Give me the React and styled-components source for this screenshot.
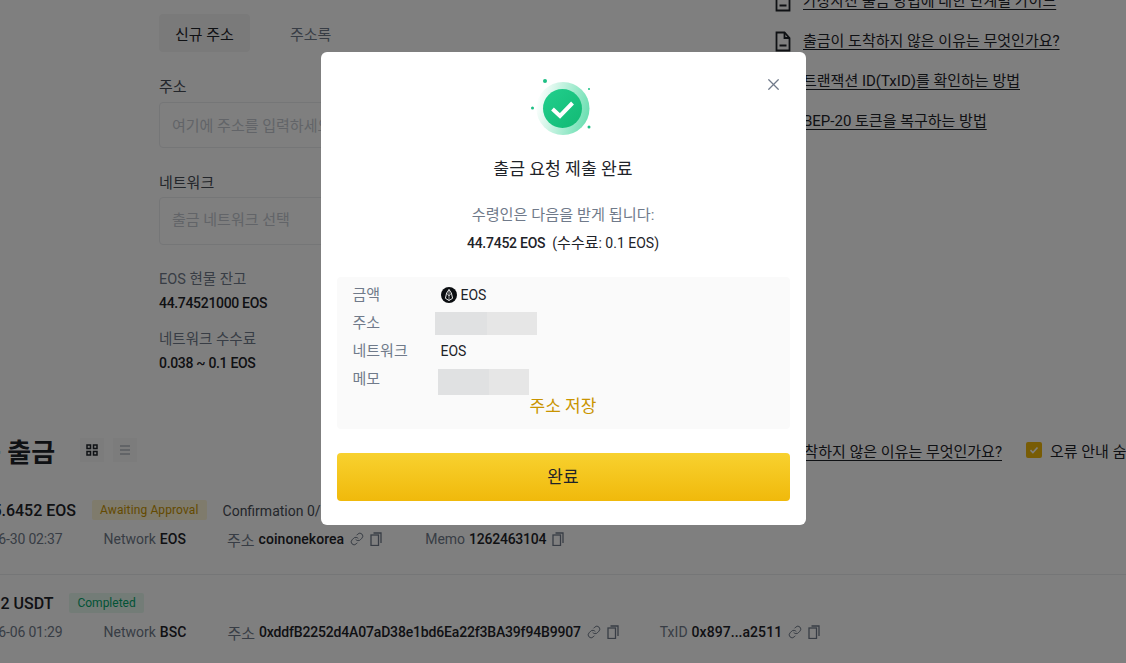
import React from "react";
import styled, { createGlobalStyle } from "styled-components";
import { X, Link } from "lucide-react";

const GlobalStyle = createGlobalStyle`
  html, body {
    margin: 0;
    padding: 0;
    background: #fff;
  }
  body {
    font-family: Roboto, "Noto Sans CJK KR", sans-serif;
    color: #1e2329;
  }
`;

const helpLinks = [
  "가상자산 출금 방법에 대한 단계별 가이드",
  "출금이 도착하지 않은 이유는 무엇인가요?",
  "트랜잭션 ID(TxID)를 확인하는 방법",
  "BEP-20 토큰을 복구하는 방법",
];

const DocIcon = () => (
  <svg width="16" height="21" viewBox="0 0 16 21" fill="none" stroke="#1e2329" strokeWidth="1.8">
    <path d="M1.5 1.5h8l5 5.5v12.5h-13z" />
    <path d="M9.5 1.5V7h5M4.5 14.5h7" />
  </svg>
);

const CopyIcon = () => (
  <svg width="12" height="14" viewBox="0 0 12 14" fill="none" stroke="#707a8a" strokeWidth="1.3">
    <rect x="1" y="3" width="7.5" height="10.5" />
    <path d="M3.5 1h7.5v10" />
  </svg>
);

const GridIcon = () => (
  <svg width="12" height="12" viewBox="0 0 12 12" fill="none" stroke="#1e2329" strokeWidth="1.5">
    <rect x="1" y="1" width="3.5" height="3.5" />
    <rect x="7.5" y="1" width="3.5" height="3.5" />
    <rect x="1" y="7.5" width="3.5" height="3.5" />
    <rect x="7.5" y="7.5" width="3.5" height="3.5" />
  </svg>
);

const ListIcon = () => (
  <svg width="12" height="12" viewBox="0 0 12 12" fill="none" stroke="#929aa5" strokeWidth="1.2">
    <path d="M1 2h10M1 6h10M1 10h10" />
  </svg>
);

const SuccessIcon = () => (
  <svg width="64" height="64" viewBox="0 0 64 64">
    <defs>
      <linearGradient id="halo" x1="0" y1="0.35" x2="1" y2="0.6">
        <stop offset="0" stopColor="#0ecb81" stopOpacity="0" />
        <stop offset="1" stopColor="#0ecb81" stopOpacity="0.62" />
      </linearGradient>
      <linearGradient id="disc" x1="0" y1="0" x2="1" y2="1">
        <stop offset="0" stopColor="#22cf8d" />
        <stop offset="1" stopColor="#12b974" />
      </linearGradient>
    </defs>
    <circle cx="32" cy="32.5" r="26.5" fill="url(#halo)" />
    <circle cx="31.5" cy="32.5" r="19.5" fill="url(#disc)" />
    <path d="M21.5 33l7.5 7 12.5-13" fill="none" stroke="#fff" strokeWidth="4" />
    <circle cx="14" cy="5" r="2" fill="#1dbf84" />
    <circle cx="58" cy="13" r="1" fill="#1dbf84" />
    <circle cx="1.5" cy="32" r="1.5" fill="#1dbf84" />
    <circle cx="58" cy="51" r="1.5" fill="#1dbf84" />
  </svg>
);

const EosIcon = () => (
  <svg width="16" height="16" viewBox="0 0 16 16">
    <circle cx="8" cy="8" r="8" fill="#0b0e11" />
    <path d="M8 2.5l2.4 3.6 1.2 5.2L8 13.5l-3.6-2.2 1.2-5.2z" fill="none" stroke="#fff" strokeWidth="0.9" />
    <path d="M8 2.5v11M5.6 6.1L8 9l2.4-2.9" fill="none" stroke="#fff" strokeWidth="0.6" />
  </svg>
);

const ChainIcon = () => <Link size={14} color="#707a8a" strokeWidth={1.7} />;

const App = () => (
  <Page>
    <GlobalStyle />
    <Top>
      <Form>
        <Tabs>
          <Tab $active>신규 주소</Tab>
          <Tab>주소록</Tab>
        </Tabs>
        <FieldLabel>주소</FieldLabel>
        <Field>여기에 주소를 입력하세요</Field>
        <FieldLabel $gap>네트워크</FieldLabel>
        <Field $tall>출금 네트워크 선택</Field>
        <Stat $first>
          <StatLabel>EOS 현물 잔고</StatLabel>
          <StatValue>44.74521000 EOS</StatValue>
        </Stat>
        <Stat>
          <StatLabel>네트워크 수수료</StatLabel>
          <StatValue>0.038 ~ 0.1 EOS</StatValue>
        </Stat>
      </Form>
      <Help>
        {helpLinks.map((text) => (
          <HelpLink key={text}>
            <DocIcon />
            <u>{text}</u>
          </HelpLink>
        ))}
      </Help>
    </Top>

    <History>
      <HistoryHead>
        <Heading>최근 출금</Heading>
        <Toggle>
          <ToggleBtn $active><GridIcon /></ToggleBtn>
          <ToggleBtn><ListIcon /></ToggleBtn>
        </Toggle>
        <HeadRight>
          <HeadLink>출금이 도착하지 않은 이유는 무엇인가요?</HeadLink>
          <Check>
            <svg width="10" height="10" viewBox="0 0 10 10" fill="none" stroke="#fff" strokeWidth="1.6">
              <path d="M1.5 5.2l2.4 2.3 4.6-5" />
            </svg>
          </Check>
          <CheckLabel>오류 안내 숨기기</CheckLabel>
        </HeadRight>
      </HistoryHead>

      <Record>
        <RecordTitle>
          <Amount>12145.6452 EOS</Amount>
          <Badge $tone="wait">Awaiting Approval</Badge>
          <Confirm>Confirmation 0/1</Confirm>
        </RecordTitle>
        <Meta>
          <DateText>2022-06-30 02:37</DateText>
          <MetaItem>Network <b>EOS</b></MetaItem>
          <MetaItem>
            <Kor>주소</Kor> <b>coinonekorea</b>
            <ChainIcon />
            <CopyIcon />
          </MetaItem>
          <MemoItem>
            Memo <b>1262463104</b>
            <CopyIcon />
          </MemoItem>
        </Meta>
      </Record>

      <Record $last>
        <RecordTitle>
          <Amount>1,000.2 USDT</Amount>
          <Badge $tone="done">Completed</Badge>
        </RecordTitle>
        <Meta>
          <DateText>2022-06-06 01:29</DateText>
          <MetaItem>Network <b>BSC</b></MetaItem>
          <MetaItem>
            <Kor>주소</Kor> <Hash>0xddfB2252d4A07aD38e1bd6Ea22f3BA39f94B9907</Hash>
            <ChainIcon />
            <CopyIcon />
          </MetaItem>
          <MetaItem>
            TxID <b>0x897...a2511</b>
            <ChainIcon />
            <CopyIcon />
          </MetaItem>
        </Meta>
      </Record>
    </History>

    <Overlay>
      <Modal>
        <CloseBtn><X size={19} strokeWidth={1.6} /></CloseBtn>
        <IconWrap><SuccessIcon /></IconWrap>
        <Title>출금 요청 제출 완료</Title>
        <Sub>수령인은 다음을 받게 됩니다:</Sub>
        <Total><b>44.7452 EOS</b>&nbsp; (<Kor>수수료</Kor>: 0.1 EOS)</Total>
        <Details>
          <DetailRow>
            <DetailLabel>금액</DetailLabel>
            <DetailValue><EosIcon />EOS</DetailValue>
          </DetailRow>
          <DetailRow>
            <DetailLabel>주소</DetailLabel>
            <Redacted $width={102} $height={23} $left={-6} $top={1} $split={52} />
          </DetailRow>
          <DetailRow>
            <DetailLabel>네트워크</DetailLabel>
            <DetailValue>EOS</DetailValue>
          </DetailRow>
          <DetailRow>
            <DetailLabel>메모</DetailLabel>
            <Redacted $width={91} $height={26} $left={-3} $top={4} $split={51} />
          </DetailRow>
          <SaveLink>주소 저장</SaveLink>
        </Details>
        <DoneBtn>완료</DoneBtn>
      </Modal>
    </Overlay>
  </Page>
);

const Page = styled.div`
  position: relative;
  width: 1126px;
  height: 663px;
  overflow: hidden;
  background: #fff;
`;

const Top = styled.div`
  display: flex;
  padding: 14px 0 0 159px;
  height: 396px;
  box-sizing: border-box;
`;

const Form = styled.div`
  width: 616px;
  flex: none;
`;

const Tabs = styled.div`
  display: flex;
  gap: 8px;
  margin-bottom: 24px;
`;

const Tab = styled.div`
  height: 38px;
  padding: 0 16px;
  display: flex;
  align-items: center;
  font-size: 15px;
  border-radius: 4px;
  color: ${(p) => (p.$active ? "#1e2329" : "#707a8a")};
  background: ${(p) => (p.$active ? "#f5f5f5" : "transparent")};
  margin-right: ${(p) => (p.$active ? "16px" : "0")};
`;

const FieldLabel = styled.div`
  font-size: 15px;
  line-height: 22px;
  color: #474d57;
  margin-top: ${(p) => (p.$gap ? "24px" : "0")};
  margin-bottom: ${(p) => (p.$gap ? "3px" : "4px")};
`;

const Field = styled.div`
  width: 560px;
  height: ${(p) => (p.$tall ? "48px" : "46px")};
  box-sizing: border-box;
  border: 1px solid #eaecef;
  border-radius: 4px;
  padding: 0 12px ${(p) => (p.$tall ? "6px" : "2px")};
  display: flex;
  align-items: center;
  font-size: 15px;
  color: #c4c9d0;
`;

const Stat = styled.div`
  margin-top: ${(p) => (p.$first ? "24px" : "15px")};
`;

const StatLabel = styled.div`
  font-size: 14.5px;
  line-height: 22px;
  color: #707a8a;
`;

const StatValue = styled.div`
  font-size: 14px;
  line-height: 22px;
  margin-top: 1px;
  font-weight: 500;
  letter-spacing: -0.32px;
`;

const Help = styled.div`
  display: flex;
  flex-direction: column;
  gap: 18px;
  margin-top: -24px;
`;

const HelpLink = styled.div`
  display: flex;
  align-items: center;
  gap: 12px;
  font-size: 15px;
  line-height: 22px;
  white-space: nowrap;
  color: #1e2329;

  u {
    text-underline-offset: 3px;
  }
`;

const History = styled.div`
  margin: 0 0 0 -44px;
  width: 1200px;
`;

const HistoryHead = styled.div`
  display: flex;
  align-items: center;
  height: 32px;
  margin-top: 38px;
  white-space: nowrap;
`;

const Heading = styled.h2`
  margin: 0 0 0 -3px;
  font-size: 26px;
  font-weight: 600;
  color: #1e2329;
`;

const Toggle = styled.div`
  display: flex;
  gap: 9px;
  margin-left: 25px;
`;

const ToggleBtn = styled.div`
  width: 24px;
  height: 24px;
  display: flex;
  align-items: center;
  justify-content: center;
  background: #f8f8f8;
`;

const HeadRight = styled.div`
  display: flex;
  align-items: center;
  margin-left: auto;
  font-size: 15px;
`;

const HeadLink = styled.u`
  margin-right: 24px;
  text-underline-offset: 3px;
`;

const Check = styled.div`
  width: 16px;
  height: 16px;
  border-radius: 2px;
  background: #f0b90b;
  display: flex;
  align-items: center;
  justify-content: center;
  margin-right: 8px;
`;

const CheckLabel = styled.span`
  width: 106px;
  color: #1e2329;
`;

const Record = styled.div`
  padding: ${(p) => (p.$last ? "16px" : "32px")} 0 ${(p) => (p.$last ? "0" : "23px")};
  border-bottom: ${(p) => (p.$last ? "none" : "1px solid #eaecef")};
`;

const RecordTitle = styled.div`
  display: flex;
  align-items: center;
  gap: 16px;
  height: 24px;
  white-space: nowrap;
`;

const Amount = styled.div`
  font-size: 16px;
  font-weight: 500;
  color: #1e2329;
`;

const Badge = styled.div`
  font-size: 12px;
  height: 20px;
  line-height: 20px;
  padding: 0 8px;
  border-radius: 2px;
  letter-spacing: ${(p) => (p.$tone === "wait" ? "0.12px" : "0")};
  color: ${(p) => (p.$tone === "wait" ? "#c99400" : "#03a66d")};
  background: ${(p) => (p.$tone === "wait" ? "#fef6d8" : "#e7f9ef")};
`;

const Confirm = styled.div`
  font-size: 14px;
  padding-top: 2px;
  color: #474d57;
`;

const Meta = styled.div`
  display: flex;
  align-items: center;
  gap: 41px;
  margin-top: 5px;
  height: 24px;
  font-size: 14px;
  color: #707a8a;
  white-space: nowrap;
`;

const DateText = styled.span`
  letter-spacing: -0.16px;
`;

const Kor = styled.span`
  font-size: 15px;
`;

const MetaItem = styled.div`
  display: flex;
  align-items: center;
  gap: 4px;

  b {
    font-weight: 500;
    color: #1e2329;
    letter-spacing: 0.05px;
  }

  svg {
    margin-left: 2px;
  }
`;

const MemoItem = styled(MetaItem)`
  margin-left: 2px;

  b {
    letter-spacing: -0.25px;
  }
`;

const Hash = styled.b`
  && {
    letter-spacing: -0.17px;
  }
`;

const Overlay = styled.div`
  position: absolute;
  inset: 0;
  background: rgba(0, 0, 0, 0.5);
  display: flex;
  justify-content: center;
  align-items: flex-start;
  padding-top: 52px;
`;

const Modal = styled.div`
  position: relative;
  width: 485px;
  box-sizing: border-box;
  background: #fff;
  border-radius: 6px;
  padding: 24px 16px;
`;

const CloseBtn = styled.div`
  position: absolute;
  top: 23px;
  right: 23px;
  color: #707a8a;
  display: flex;
`;

const IconWrap = styled.div`
  display: flex;
  justify-content: center;
  height: 64px;
`;

const Title = styled.div`
  margin-top: 17px;
  text-align: center;
  font-size: 17.2px;
  line-height: 24px;
  color: #1e2329;
`;

const Sub = styled.div`
  margin-top: 23px;
  text-align: center;
  font-size: 15.2px;
  line-height: 22px;
  color: #707a8a;
`;

const Total = styled.div`
  margin-top: 6px;
  text-align: center;
  font-size: 14px;
  line-height: 22px;
  color: #1e2329;

  b {
    font-weight: 500;
    letter-spacing: -0.25px;
  }
`;

const Details = styled.div`
  margin-top: 23px;
  background: #fafafa;
  border-radius: 4px;
  padding: 3px 16px 12px;
`;

const DetailRow = styled.div`
  display: flex;
  align-items: center;
  height: 28px;
  font-size: 15px;
`;

const DetailLabel = styled.div`
  width: 88px;
  flex: none;
  padding-bottom: 2px;
  color: #707a8a;
`;

const DetailValue = styled.div`
  display: flex;
  align-items: center;
  gap: 4px;
  font-size: 14px;
  padding-top: 2px;
  color: #1e2329;
`;

const Redacted = styled.div`
  position: relative;
  left: ${(p) => p.$left}px;
  top: ${(p) => p.$top}px;
  width: ${(p) => p.$width}px;
  height: ${(p) => p.$height}px;
  background: linear-gradient(
    to right,
    #e0e1e2 ${(p) => p.$split}px,
    #e6e6e6 ${(p) => p.$split}px
  );
`;

const SaveLink = styled.div`
  margin-top: 1px;
  padding-top: 1px;
  height: 23px;
  text-align: center;
  font-size: 17px;
  line-height: 24px;
  color: #c99400;
`;

const DoneBtn = styled.div`
  margin-top: 24px;
  height: 45px;
  padding-bottom: 3px;
  display: flex;
  align-items: center;
  justify-content: center;
  border-radius: 4px;
  font-size: 17px;
  color: #1e2329;
  background: linear-gradient(180deg, #f8d12f 0%, #f0b90b 100%);
`;

export default App;
